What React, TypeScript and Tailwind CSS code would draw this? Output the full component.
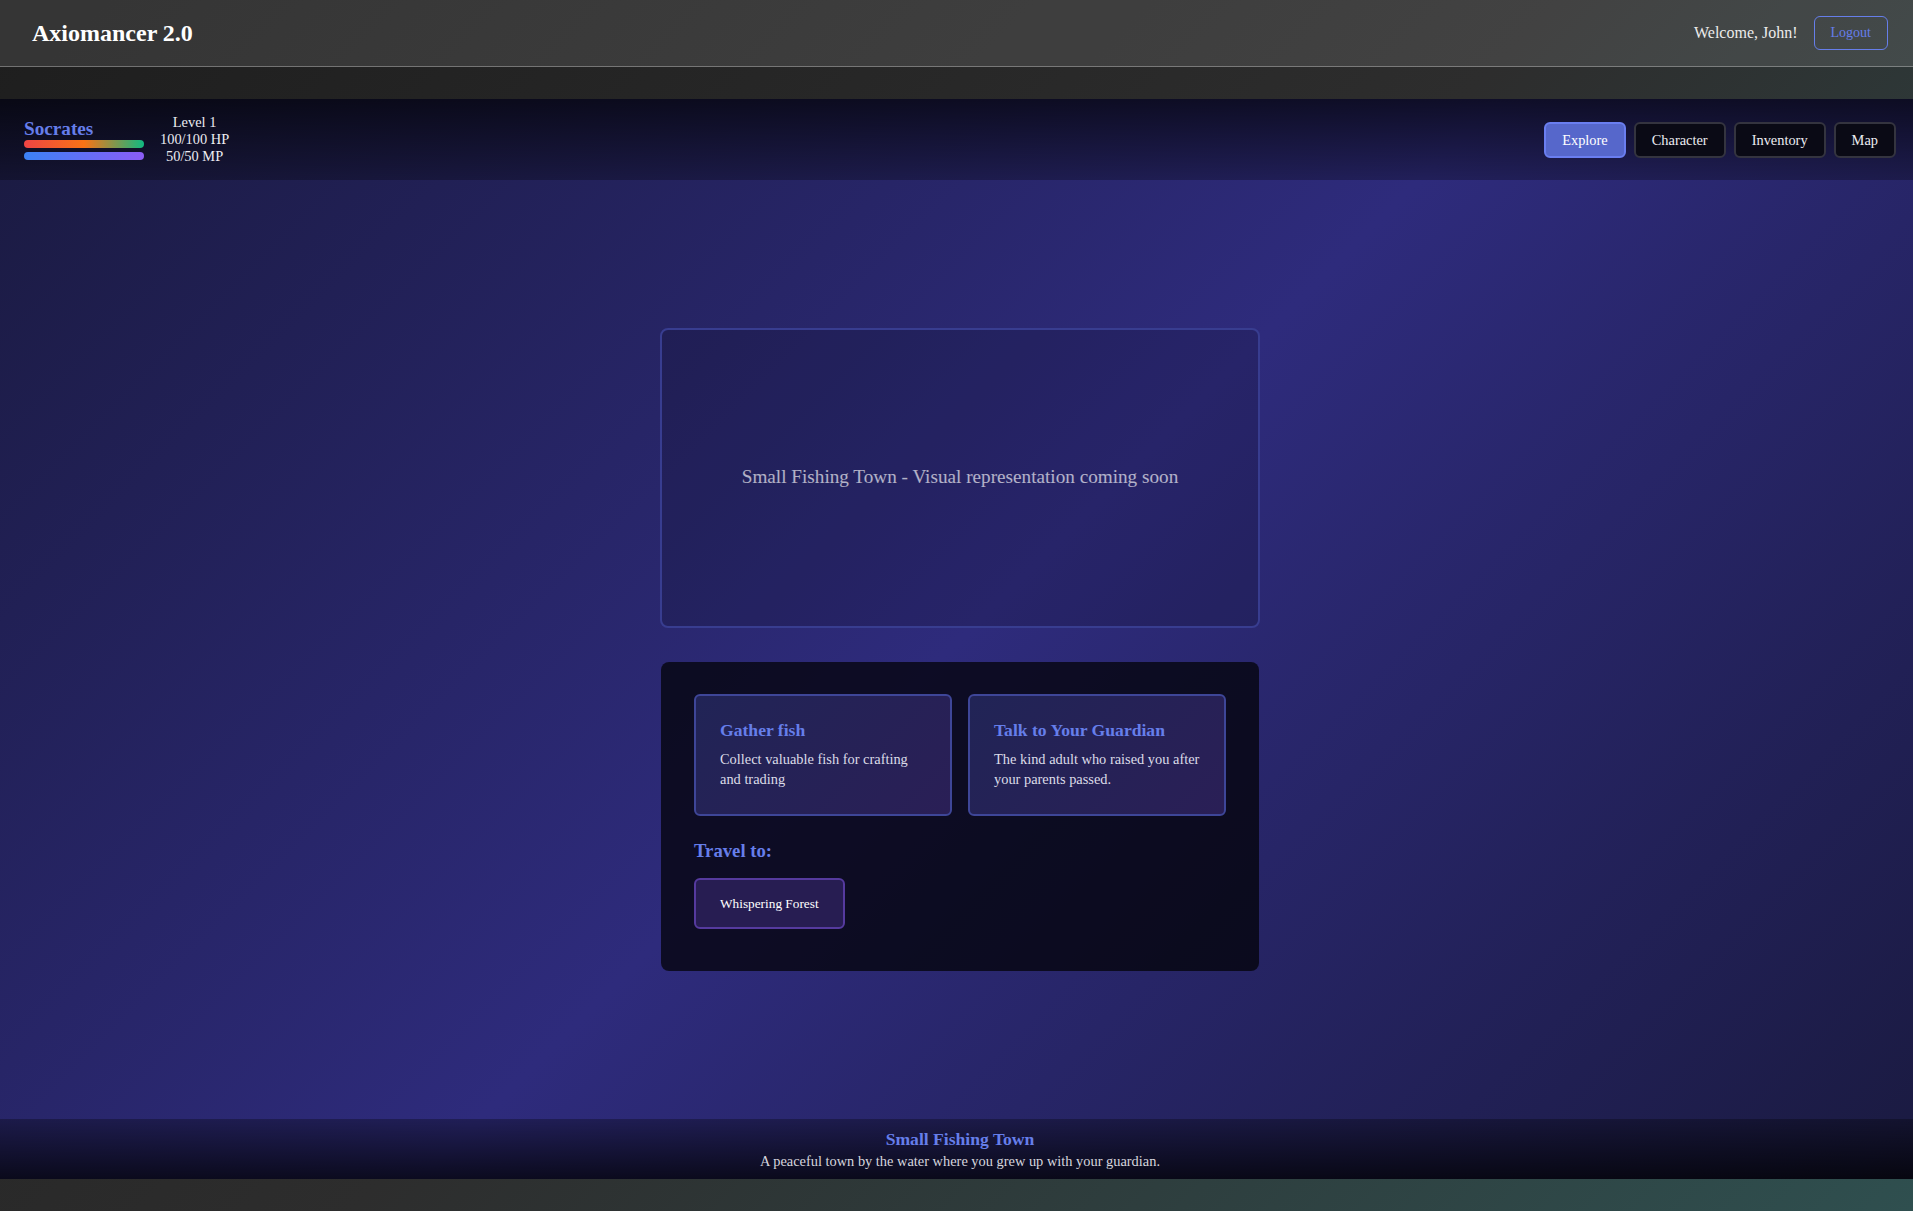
const navItems = ["Explore", "Character", "Inventory", "Map"];

const actions = [
  {
    title: "Gather fish",
    text: "Collect valuable fish for crafting and trading",
  },
  {
    title: "Talk to Your Guardian",
    text: "The kind adult who raised you after your parents passed.",
  },
];

function StatsBar() {
  return (
    <div className="flex h-[81px] shrink-0 items-center justify-between bg-[linear-gradient(to_bottom,rgba(0,0,0,0.68),rgba(0,0,0,0.28))] px-6">
      <div className="flex items-center gap-4">
        <div className="flex w-[120px] flex-col">
          <span className="text-[19.2px] font-bold leading-[20px] text-[#667eea]">Socrates</span>
          <div className="mt-[1px] h-2 w-full rounded-full bg-[linear-gradient(to_right,#ef4444,#f97316_50%,#10b981)]" />
          <div className="mt-1 h-2 w-full rounded-full bg-[linear-gradient(to_right,#3b82f6,#8b5cf6)]" />
        </div>
        <div className="flex flex-col text-center text-[14.4px] leading-[17px] text-[#ececf2]">
          <span>Level 1</span>
          <span>100/100 HP</span>
          <span>50/50 MP</span>
        </div>
      </div>
      <nav className="flex gap-2">
        {navItems.map((item) => (
          <button
            key={item}
            className={
              item === "Explore"
                ? "rounded-md border-2 border-[#6a7ef0] bg-[#5667cb] px-4 py-2 text-[14.4px] leading-4 text-white"
                : "rounded-md border-2 border-[#34343f] bg-[#0a0a15] px-4 py-2 text-[14.4px] leading-4 text-[#ececf2]"
            }
          >
            {item}
          </button>
        ))}
      </nav>
    </div>
  );
}

export default function App() {
  return (
    <div className="flex h-screen flex-col overflow-hidden bg-[linear-gradient(135deg,#1e1e1e_0%,#2d2d2d_50%,#2f4f4f_100%)] font-['Liberation_Serif',serif] text-white">
      <header className="flex h-[67px] shrink-0 items-center justify-between border-b border-white/30 bg-white/10 pl-8 pr-[25px]">
        <h1 className="text-2xl font-bold">Axiomancer 2.0</h1>
        <div className="flex items-center gap-4">
          <span className="text-base text-[#ececec]">Welcome, John!</span>
          <button className="rounded-md border border-[#667eea] px-4 py-2 text-sm leading-4 text-[#667eea]">
            Logout
          </button>
        </div>
      </header>

      <main className="min-h-0 flex-1 py-8">
        <div className="flex h-full w-[1920px] flex-col bg-[linear-gradient(135deg,#1a1a40_0%,#2e2b7c_50%,#1a1a40_100%)]">
          <StatsBar />

          <div className="flex flex-1 flex-col items-center justify-center">
            <div className="flex h-[300px] w-[600px] items-center justify-center rounded-lg border-2 border-[#383d90] bg-black/15">
              <p className="text-[19.2px] text-white/65">
                Small Fishing Town - Visual representation coming soon
              </p>
            </div>

            <div className="mt-[34px] w-[598px] rounded-lg bg-black/70 px-[33px] pb-[42px] pt-8">
              <div className="grid grid-cols-2 gap-4">
                {actions.map((a) => (
                  <div
                    key={a.title}
                    className="rounded-md border-2 border-[#3e4698] bg-[linear-gradient(135deg,#212456,#2a1f56)] p-6"
                  >
                    <h4 className="mb-2 text-[17.6px] font-bold leading-[21px] text-[#667eea]">{a.title}</h4>
                    <p className="text-[14.4px] leading-[20.8px] text-[#dcdce8]">{a.text}</p>
                  </div>
                ))}
              </div>

              <h3 className="mb-4 mt-6 text-[18.72px] font-bold leading-[21.5px] text-[#667eea]">Travel to:</h3>
              <div className="flex gap-4">
                <button className="rounded-md border-2 border-[#553a9e] bg-[#271d52] px-6 py-4 text-[13.3px] leading-[15.6px] text-white">
                  Whispering Forest
                </button>
              </div>
            </div>
          </div>

          <div className="flex h-[60px] shrink-0 flex-col items-center justify-center bg-[linear-gradient(to_bottom,rgba(0,0,0,0.3),rgba(0,0,0,0.75))]">
            <h2 className="mb-1 text-[17.6px] font-bold leading-[20px] text-[#667eea]">Small Fishing Town</h2>
            <p className="text-[14.4px] leading-[16.5px] text-[#d6d6de]">
              A peaceful town by the water where you grew up with your guardian.
            </p>
          </div>
        </div>
      </main>
    </div>
  );
}
